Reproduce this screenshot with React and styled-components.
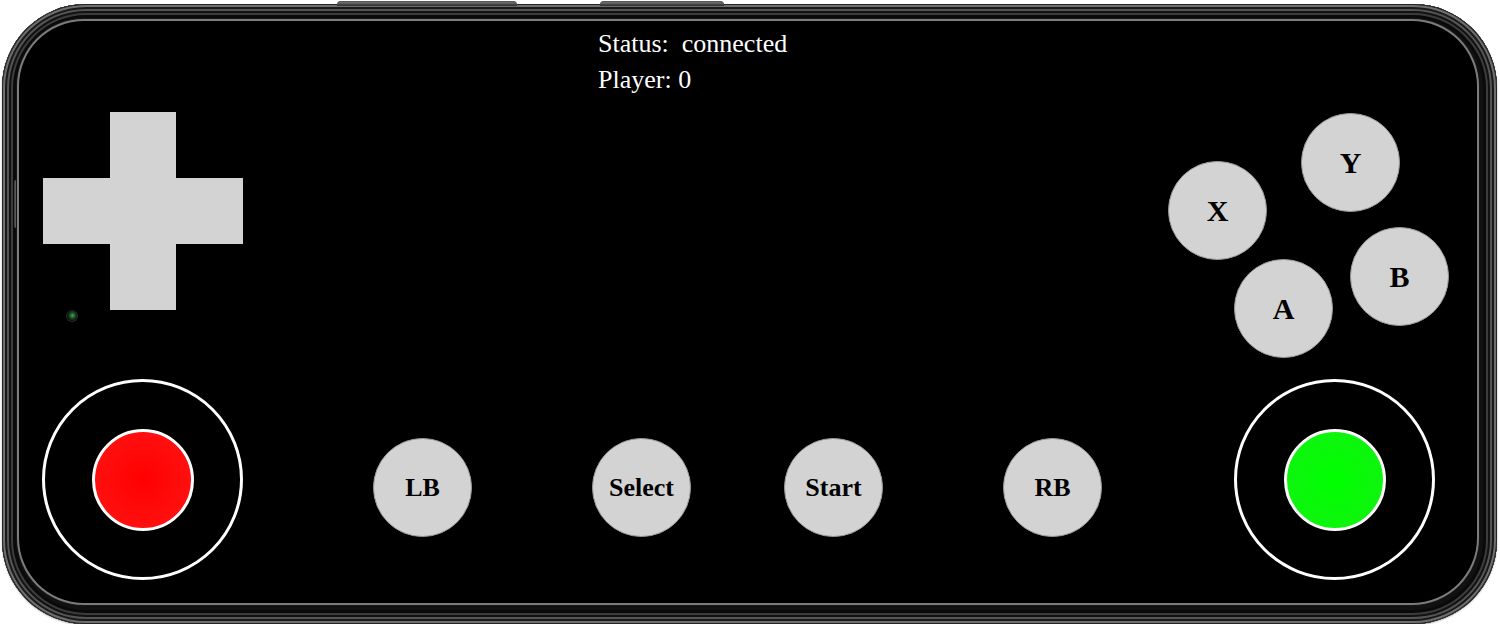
import React from 'react';
import styled, { createGlobalStyle } from 'styled-components';

const GlobalStyle = createGlobalStyle`
  html, body {
    margin: 0;
    padding: 0;
    background: #ffffff;
    overflow: hidden;
  }
  body {
    font-family: "Liberation Serif", "Times New Roman", serif;
  }
`;

const SCPhone = styled.div`
  position: relative;
  box-sizing: border-box;
  width: 1495px;
  height: 620px;
  margin: 4px 0 0 2px;
  padding: 18px 21px 22px 18px;
  border-radius: 84px;
  background: #111111;
  box-shadow:
    inset 0 0 0 1px #242424,
    inset 0 0 0 3px #6e6e6e,
    inset 0 0 0 5px #1a1a1a,
    inset 0 0 0 7px #555555,
    inset 0 0 0 9px #121212,
    inset 0 0 0 11px #3c3c3c,
    inset 0 0 0 14px #0a0a0a,
    0 1px 2px rgba(0, 0, 0, 0.35);
`;

const SCSideKey = styled.div`
  position: absolute;
  top: -3px;
  left: ${(p) => p.$left}px;
  width: ${(p) => p.$width}px;
  height: 5px;
  border-radius: 4px 4px 0 0;
  background: linear-gradient(#8a8a8a, #2a2a2a);
  box-shadow: inset 0 1px 0 #555;
`;

const SCEdgeStrip = styled.div`
  position: absolute;
  left: 12px;
  top: 176px;
  width: 5px;
  height: 48px;
  border-radius: 2px;
  background: linear-gradient(90deg, #3a3a3a, #9a9a9a);
`;

const SCScreen = styled.div`
  position: relative;
  box-sizing: border-box;
  display: flex;
  flex-direction: column;
  width: 100%;
  height: 100%;
  border-radius: 64px;
  background: #000000;
  box-shadow: 0 0 0 1px #000, 0 0 0 3px #7c7c7c, 0 0 0 4px #161616;
  overflow: hidden;
`;

const SCCamera = styled.div`
  position: absolute;
  left: 47px;
  top: 289px;
  width: 10px;
  height: 10px;
  border-radius: 50%;
  background: radial-gradient(circle at 55% 45%, #3fae4f 0, #1d4a22 35%, #0b0f0c 70%);
  box-shadow: 0 0 0 1px #2a2a2a;
`;

const SCInfo = styled.div`
  margin-left: 578px;
  padding-top: 4px;
  color: #ffffff;
  font-size: 26px;
  line-height: 36px;
`;

const SCMiddle = styled.div`
  display: flex;
  justify-content: space-between;
  align-items: flex-start;
  margin-top: 14px;
  padding: 0 27px 0 23px;
`;

const SCDpad = styled.div`
  display: grid;
  grid-template-columns: repeat(3, 66.5px);
  grid-template-rows: repeat(3, 66px);
`;

const SCDpadKey = styled.div`
  grid-column: ${(p) => p.$col};
  grid-row: ${(p) => p.$row};
  background: #d3d3d3;
`;

const SCFace = styled.div`
  position: relative;
  width: 281px;
  height: 245px;
  margin-top: 1px;
`;

const SCRoundButton = styled.div`
  box-sizing: border-box;
  display: flex;
  align-items: center;
  justify-content: center;
  width: 99px;
  height: 99px;
  border-radius: 50%;
  border: 1px solid #9a9a9a;
  background: #d3d3d3;
  color: #000000;
  font-weight: 700;
  font-size: ${(p) => p.$size || 26}px;
  flex-shrink: 0;
`;

const SCFaceButton = styled(SCRoundButton)`
  position: absolute;
  left: ${(p) => p.$x}px;
  top: ${(p) => p.$y}px;
`;

const SCBottom = styled.div`
  display: flex;
  align-items: center;
  margin-top: auto;
  padding: 0 0 22px 22px;
`;

const SCMenuButton = styled(SCRoundButton)`
  margin-left: ${(p) => p.$gap}px;
  margin-top: 16px;
`;

const SCStickBase = styled.div`
  box-sizing: border-box;
  display: flex;
  align-items: center;
  justify-content: center;
  width: 201px;
  height: 201px;
  margin-left: ${(p) => p.$gap || 0}px;
  border-radius: 50%;
  border: 3px solid #ffffff;
  flex-shrink: 0;
`;

const SCStickKnob = styled.div`
  box-sizing: border-box;
  width: 102px;
  height: 102px;
  border-radius: 50%;
  border: 3px solid #ffffff;
  background: ${(p) => p.$bg};
`;

const faceButtons = [
  { label: 'Y', x: 133, y: 0 },
  { label: 'X', x: 0, y: 48 },
  { label: 'B', x: 182, y: 114 },
  { label: 'A', x: 66, y: 146 },
];

const menuButtons = [
  { label: 'LB', gap: 130 },
  { label: 'Select', gap: 120 },
  { label: 'Start', gap: 93 },
  { label: 'RB', gap: 120 },
];

const dpadKeys = [
  { col: 2, row: 1 },
  { col: 1, row: 2 },
  { col: 2, row: 2 },
  { col: 3, row: 2 },
  { col: 2, row: 3 },
];

const App = () => {
  return (
    <>
      <GlobalStyle />
      <SCPhone>
        <SCSideKey $left={335} $width={180} />
        <SCSideKey $left={598} $width={124} />
        <SCEdgeStrip />
        <SCScreen>
          <SCCamera />
          <SCInfo>
            <div>Status:&nbsp; connected</div>
            <div>Player: 0</div>
          </SCInfo>
          <SCMiddle>
            <SCDpad>
              { dpadKeys.map((k) => (
                <SCDpadKey key={ `${k.col}-${k.row}` } $col={ k.col } $row={ k.row } />
              )) }
            </SCDpad>
            <SCFace>
              { faceButtons.map((b) => (
                <SCFaceButton key={ b.label } $x={ b.x } $y={ b.y } $size={ 30 }>
                  { b.label }
                </SCFaceButton>
              )) }
            </SCFace>
          </SCMiddle>
          <SCBottom>
            <SCStickBase>
              <SCStickKnob $bg='radial-gradient(circle, #ff0000 0%, #ff1616 100%)' />
            </SCStickBase>
            { menuButtons.map((b) => (
              <SCMenuButton key={ b.label } $gap={ b.gap }>{ b.label }</SCMenuButton>
            )) }
            <SCStickBase $gap={ 132 }>
              <SCStickKnob $bg='radial-gradient(circle, #00ff00 0%, #14f014 100%)' />
            </SCStickBase>
          </SCBottom>
        </SCScreen>
      </SCPhone>
    </>
  );
};

export default App;
